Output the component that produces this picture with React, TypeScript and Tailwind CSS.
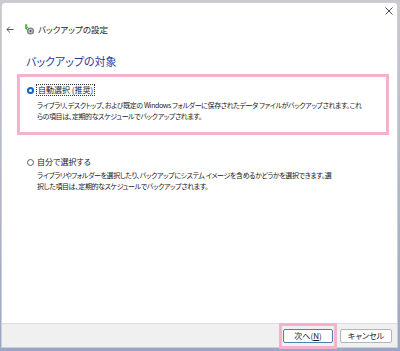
import React from "react";

const JP = "font-['Meiryo_UI','Noto_Sans_CJK_JP',sans-serif] [font-feature-settings:'palt']";

function BackupIcon() {
  return (
    <svg width="11" height="11" viewBox="0 0 11 11">
      <circle cx="6.5" cy="7" r="3.6" fill="#7d828c" />
      <circle cx="6.5" cy="7" r="2.3" fill="#c2c5cc" />
      <circle cx="6.5" cy="7" r="1" fill="#4f535a" />
      <path d="M1.2 1.2 L1.2 4.5 L3.6 6.8 L3 3.8 L4.8 3.8 Z" fill="#3ba52b" />
      <path d="M1 1 L2.6 1 L2.6 4" stroke="#4cbf3a" strokeWidth="1.3" fill="none" />
    </svg>
  );
}

function Radio({ checked }: { checked?: boolean }) {
  return checked ? (
    <span className="flex h-[7px] w-[7px] items-center justify-center rounded-full bg-[#1262c4]">
      <span className="h-[3px] w-[3px] rounded-full bg-white" />
    </span>
  ) : (
    <span className="h-[7px] w-[7px] rounded-full border border-[#5c5c5c] bg-white" />
  );
}

export default function App() {
  return (
    <div className={`h-[351px] w-[400px] overflow-hidden bg-gradient-to-b from-[#c8cad0] to-[#9aa6c8] pl-px pt-[2px] ${JP}`}>
      <div className="flex h-[346px] w-[397px] flex-col rounded-t-[4px] border border-[#cfcfcf] bg-white text-[#1a1a1a]">
        {/* title bar */}
        <div className="flex h-[20px] justify-end pr-[4px] pt-[4px]">
          <svg width="8" height="8" viewBox="0 0 8 8">
            <path d="M0.5 0.5 L7.5 7.5 M7.5 0.5 L0.5 7.5" stroke="#333" strokeWidth="0.9" />
          </svg>
        </div>

        <div className="flex h-[12px] items-center pl-[4px]">
          <svg width="8" height="7" viewBox="0 0 8 7">
            <path d="M7.5 3.5 H1 M3.8 0.6 L0.9 3.5 L3.8 6.4" stroke="#444" strokeWidth="0.9" fill="none" />
          </svg>
          <span className="ml-[10px]">
            <BackupIcon />
          </span>
          <span className="ml-[3px] text-[8.5px] leading-[12px]">バックアップの設定</span>
        </div>

        <div className="ml-[24px] mt-[19px] text-[11px] leading-[14px] text-[#1e3d94]">バックアップの対象</div>

        <div className="ml-[15px] mt-[6px] w-[372px] border-[3px] border-[#f5b3cb] pb-[10px] pl-[7px] pt-[7px]">
          <div className="flex h-[12px] items-center">
            <Radio checked />
            <span className="ml-[2px] border border-dotted border-[#333] px-px text-[8px] leading-[10px]">自動選択 (推奨)</span>
          </div>
          <div className="ml-[10px] mt-[4px] whitespace-pre text-[7px] leading-[11px] tracking-[-0.4px]">
            <div>ライブラリ、デスクトップ、および既定の Windows フォルダーに保存されたデータ ファイルがバックアップされます。これ</div>
            <div>らの項目は、定期的なスケジュールでバックアップされます。</div>
          </div>
        </div>

        <div className="ml-[25px] mt-[21px]">
          <div className="flex h-[12px] items-center">
            <Radio />
            <span className="ml-[3px] text-[8px] leading-[10px]">自分で選択する</span>
          </div>
          <div className="ml-[10px] mt-[2px] whitespace-pre text-[7px] leading-[11px] tracking-[-0.4px]">
            <div>ライブラリやフォルダーを選択したり、バックアップにシステム イメージを含めるかどうかを選択できます。選</div>
            <div>択した項目は、定期的なスケジュールでバックアップされます。</div>
          </div>
        </div>

        <div className="mt-auto flex h-[24px] items-center justify-end border-t border-[#dcdcdc] bg-[#f0f0f0] pr-[5px]">
          <div className="-my-px border-[3px] border-[#f5b3cb] px-px py-[3px]">
            <button className="flex h-[14px] w-[50px] items-center justify-center rounded-[2px] border border-[#4f7fb3] bg-white text-[8px] leading-none">
              次へ(<span className="underline">N</span>)
            </button>
          </div>
          <button className="ml-[3px] flex h-[14px] w-[52px] items-center justify-center rounded-[2px] border border-[#b5b5b5] bg-white text-[8px] leading-none">
            キャンセル
          </button>
        </div>
      </div>
    </div>
  );
}
